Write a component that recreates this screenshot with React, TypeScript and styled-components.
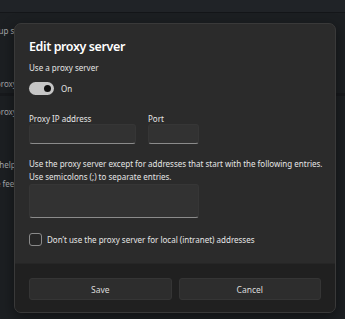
import React from "react";
import styled, { createGlobalStyle } from "styled-components";

const GlobalStyle = createGlobalStyle`
    html, body {
        margin: 0;
        padding: 0;
        background: #1c1f22;
    }

    body {
        font-family: "Noto Sans", "Open Sans", sans-serif;
        -webkit-font-smoothing: antialiased;
    }
`;

const Screen = styled.div`
    position: relative;
    width: 345px;
    height: 319px;
    overflow: hidden;
    background: #1c1f22;
`;

const TopBar = styled.div`
    height: 12px;
    background: #202327;
    border-bottom: 1px solid #141619;
`;

const Pane = styled.div`
    display: flex;
    flex-direction: column;
`;

const PeekText = styled.div<{ $top: number; $shift: number }>`
    margin-top: ${(p) => p.$top}px;
    margin-left: ${(p) => p.$shift}px;
    height: 12px;
    line-height: 12px;
    font-size: 8px;
    color: #a7a9ac;
    white-space: nowrap;
`;

const Divider = styled.div<{ $top: number }>`
    margin-top: ${(p) => p.$top}px;
    height: 3px;
    background: #17191c;
`;

const Dialog = styled.div`
    position: absolute;
    top: 23px;
    left: 14px;
    width: 322px;
    height: 290px;
    box-sizing: border-box;
    display: flex;
    flex-direction: column;
    background: #2b2b2b;
    border: 1px solid #393939;
    border-radius: 7px;
    overflow: hidden;
    box-shadow: 0 4px 14px rgba(0, 0, 0, 0.45);
`;

const Body = styled.div`
    flex: 1;
    display: flex;
    flex-direction: column;
    padding: 14px 14px 0;
`;

const Title = styled.div`
    font-size: 12.5px;
    line-height: 18px;
    font-weight: 600;
    letter-spacing: -0.4px;
    color: #ffffff;
`;

const Label = styled.div<{ $top?: number }>`
    margin-top: ${(p) => p.$top ?? 0}px;
    font-size: 8px;
    line-height: 11px;
    color: #e6e6e6;
    white-space: nowrap;
`;

const ToggleRow = styled.div`
    margin-top: 9px;
    display: flex;
    align-items: center;
    gap: 7px;
    height: 13px;
`;

const Track = styled.div`
    width: 25px;
    height: 13px;
    box-sizing: border-box;
    border-radius: 7px;
    background: #c6c6c6;
    display: flex;
    align-items: center;
    justify-content: flex-end;
    padding-right: 3px;
`;

const Knob = styled.div`
    width: 7px;
    height: 7px;
    border-radius: 50%;
    background: #101010;
`;

const StateText = styled.span`
    font-size: 8px;
    color: #e6e6e6;
`;

const FieldRow = styled.div`
    margin-top: 18px;
    display: flex;
    gap: 12px;
`;

const Field = styled.div`
    display: flex;
    flex-direction: column;
    gap: 0;
`;

const TextBox = styled.div<{ $w: number; $h?: number }>`
    width: ${(p) => p.$w}px;
    height: ${(p) => p.$h ?? 20}px;
    box-sizing: border-box;
    background: #323232;
    border: 1px solid #363636;
    border-bottom: 1px solid #8b8b8b;
    border-radius: 3px;
`;

const Hint = styled.div`
    margin-top: 14px;
    font-size: 8px;
    line-height: 12.5px;
    color: #e6e6e6;
    white-space: nowrap;
`;

const AreaWrap = styled.div`
    margin-top: 1px;
`;

const CheckRow = styled.div`
    margin-top: 15px;
    display: flex;
    align-items: center;
    gap: 5px;
`;

const Box = styled.div`
    width: 13px;
    height: 13px;
    box-sizing: border-box;
    border: 1px solid #8a8a8a;
    border-radius: 3px;
    background: #272727;
`;

const Footer = styled.div`
    height: 49px;
    box-sizing: border-box;
    padding: 14px 14px 0;
    background: #202020;
    border-top: 1px solid #262626;
    display: grid;
    grid-template-columns: 1fr 1fr;
    gap: 7px;
    align-items: start;
`;

const Button = styled.div`
    height: 20px;
    display: flex;
    align-items: center;
    justify-content: center;
    background: #2d2d2d;
    border: 1px solid #353535;
    border-radius: 3px;
    font-size: 8.5px;
    color: #dcdcdc;
`;

export default function App() {
    return (
        <Screen>
            <GlobalStyle />
            <TopBar />
            <Pane>
                <PeekText $top={12} $shift={-29}>Use setup script</PeekText>
                <PeekText $top={41} $shift={-27}>Use a proxy server</PeekText>
                <Divider $top={3} />
                <PeekText $top={10} $shift={-27}>Use a proxy server</PeekText>
                <PeekText $top={41} $shift={-16}>Get help</PeekText>
                <PeekText $top={7} $shift={-16}>Give feedback</PeekText>
            </Pane>

            <Dialog>
                <Body>
                    <Title>Edit proxy server</Title>
                    <Label $top={6}>Use a proxy server</Label>
                    <ToggleRow>
                        <Track>
                            <Knob />
                        </Track>
                        <StateText>On</StateText>
                    </ToggleRow>
                    <FieldRow>
                        <Field>
                            <Label>Proxy IP address</Label>
                            <TextBox $w={107} />
                        </Field>
                        <Field>
                            <Label>Port</Label>
                            <TextBox $w={51} />
                        </Field>
                    </FieldRow>
                    <Hint>
                        Use the proxy server except for addresses that start with the following entries.
                        <br />
                        Use semicolons (;) to separate entries.
                    </Hint>
                    <AreaWrap>
                        <TextBox $w={170} $h={34} />
                    </AreaWrap>
                    <CheckRow>
                        <Box />
                        <Label>Don’t use the proxy server for local (intranet) addresses</Label>
                    </CheckRow>
                </Body>
                <Footer>
                    <Button>Save</Button>
                    <Button>Cancel</Button>
                </Footer>
            </Dialog>
        </Screen>
    );
}
